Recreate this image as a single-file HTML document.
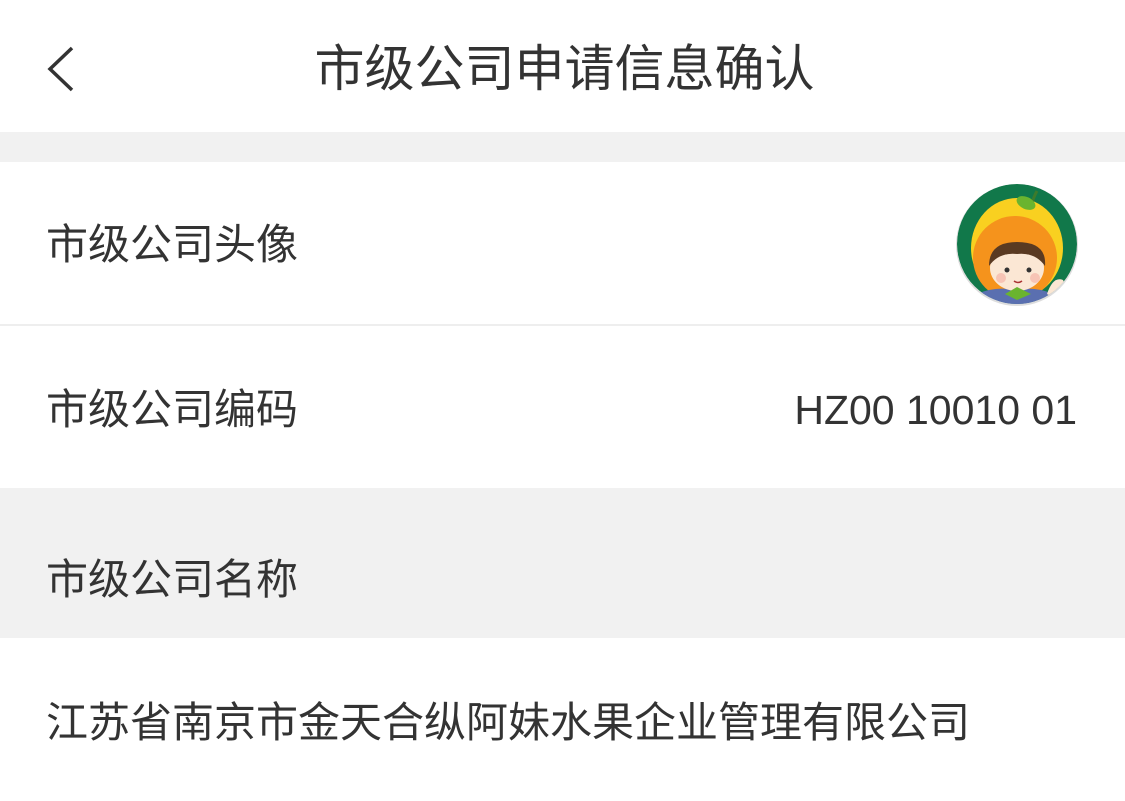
<!DOCTYPE html>
<html><head><meta charset="utf-8"><style>
body{margin:0;width:1125px;height:801px;overflow:hidden;background:#fff;font-family:"Liberation Sans","Noto Sans CJK SC",sans-serif;color:#333;position:relative}
.a{position:absolute}
.t{font-size:42px;line-height:42px;left:46px;position:absolute}
</style></head><body>
<svg class="a" style="left:44px;top:46px" width="34" height="46" viewBox="0 0 34 46"><path d="M28 2 L6 23 L28 44" fill="none" stroke="#333" stroke-width="3.5"/></svg>
<div class="a" style="left:0;width:1125px;top:42px;text-align:center;font-size:50px;line-height:54px;color:#333;padding-left:4px;box-sizing:border-box">市级公司申请信息确认</div>
<div class="a" style="left:0;top:132px;width:1125px;height:30px;background:#f1f1f1"></div>
<div class="t" style="top:224px">市级公司头像</div>
<svg class="a" style="left:955px;top:182px" width="124" height="124" viewBox="0 0 124 124">
<defs><clipPath id="c"><circle cx="62" cy="62" r="60"/></clipPath></defs>
<circle cx="62" cy="63" r="61" fill="#ddd"/>
<g clip-path="url(#c)">
<circle cx="62" cy="62" r="60" fill="#11784a"/>
<ellipse cx="62" cy="66" rx="46" ry="50" fill="#f9d020"/>
<circle cx="60" cy="76" r="42" fill="#f5931c"/>
<path d="M76 24 Q79 14 82 9" stroke="#3d7b2c" stroke-width="3" fill="none"/>
<ellipse cx="71" cy="21" rx="10" ry="6" fill="#6ab42f" transform="rotate(25 71 21)"/>
<path d="M20 124 L22 112 Q40 104 60 108 Q80 104 98 112 L100 124 Z" fill="#5a6fb0"/>
<ellipse cx="62" cy="86" rx="27" ry="23" fill="#fbe7d4"/>
<path d="M34 84 Q34 60 62 60 Q92 60 90 84 Q80 70 62 72 Q44 70 34 84Z" fill="#5a3a22"/>
<circle cx="52" cy="88" r="2.5" fill="#333"/><circle cx="74" cy="88" r="2.5" fill="#333"/>
<circle cx="46" cy="96" r="5" fill="#f7c4b5"/><circle cx="80" cy="96" r="5" fill="#f7c4b5"/>
<path d="M59 99 Q63 102 67 99" stroke="#a33" stroke-width="1.5" fill="none"/>
<path d="M92 112 Q98 94 108 98 Q112 104 102 118Z" fill="#fbe7d4"/>
<path d="M50 112 L62 105 L76 112 L62 118Z" fill="#6ab42f"/>
</g>
</svg>
<div class="a" style="left:0;top:324px;width:1125px;height:2px;background:#eee"></div>
<div class="t" style="top:389px">市级公司编码</div>
<div class="a" style="right:48px;top:389px;font-size:41px;line-height:42px">HZ00 10010 01</div>
<div class="a" style="left:0;top:488px;width:1125px;height:150px;background:#f1f1f1"></div>
<div class="t" style="top:559px">市级公司名称</div>
<div class="t" style="top:702px">江苏省南京市金天合纵阿妹水果企业管理有限公司</div>
</body></html>
